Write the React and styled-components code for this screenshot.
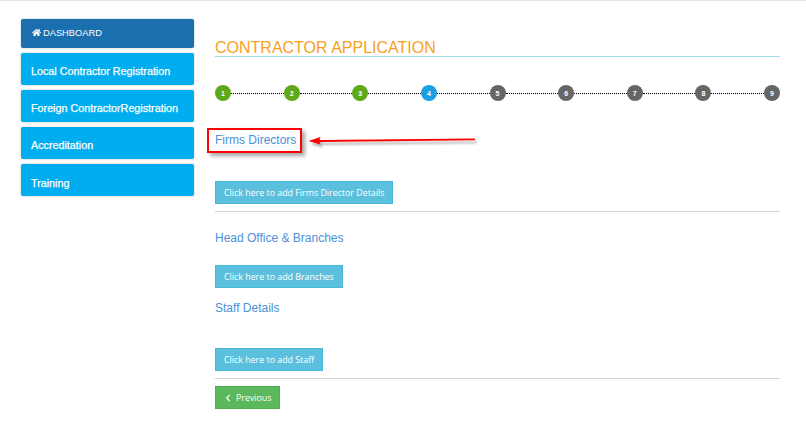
import React from "react";
import styled, { createGlobalStyle } from "styled-components";
import { FaHome, FaChevronLeft } from "react-icons/fa";

const Global = createGlobalStyle`
  html, body { margin: 0; padding: 0; background: #fff; }
  body { font-family: "Liberation Sans", Arial, sans-serif; }
`;

const Page = styled.div`
  position: relative;
  width: 806px;
  height: 431px;
  overflow: hidden;
  box-sizing: border-box;
  border-top: 1px solid #e7e7e7;
  padding: 18px 26px 0 21px;
  display: flex;
  gap: 21px;
`;

const Sidebar = styled.nav`
  width: 173px;
  flex: none;
  display: flex;
  flex-direction: column;
  gap: 5px;
`;

const NavItem = styled.a`
  height: ${(p) => (p.$head ? "29px" : "32px")};
  display: flex;
  align-items: center;
  gap: 2px;
  box-sizing: border-box;
  padding: ${(p) => (p.$head ? "0 0 2px 11px" : "4px 0 0 10px")};
  border-radius: 2px;
  background: ${(p) => (p.$head ? "#1a6fae" : "#00aeef")};
  box-shadow: 0 0 2px rgba(0, 0, 0, 0.3);
  color: #fff;
  font-size: ${(p) => (p.$head ? "9.3px" : "10.75px")};
  -webkit-text-stroke: ${(p) => (p.$head ? "0" : "0.25px #fff")};

  &:last-child {
    padding-top: 6px;
  }
`;

const Main = styled.main`
  flex: 1;
  min-width: 0;
  display: flex;
  flex-direction: column;
`;

const Title = styled.h1`
  margin: 20px 0 0;
  height: 17px;
  border-bottom: 1px solid #a3dce9;
  color: #f9a01b;
  font-size: 16px;
  line-height: 18px;
  font-weight: 400;
`;

const Stepper = styled.div`
  margin-top: 28px;
  display: flex;
  align-items: center;
`;

const Step = styled.span`
  width: 16px;
  height: 16px;
  flex: none;
  border-radius: 50%;
  display: flex;
  align-items: center;
  justify-content: center;
  background: ${(p) => p.$color};
  color: #fff;
  font-size: 7px;
  font-weight: 700;
`;

const Connector = styled.span`
  flex: 1;
  border-top: 1px dotted #000;
`;

const SectionLabel = styled.div`
  color: #4a90d9;
  font-size: 12px;
  line-height: 14px;
  margin-top: ${(p) => p.$top}px;
`;

const ActionButton = styled.button`
  display: flex;
  align-items: center;
  gap: 4px;
  align-self: flex-start;
  height: 23px;
  box-sizing: border-box;
  margin-top: ${(p) => p.$top}px;
  padding: ${(p) => (p.$green ? "0 7px 0 8px" : "0 8px")};
  border: 1px solid ${(p) => (p.$green ? "#4cae4c" : "#46b8da")};
  border-radius: 0;
  background: ${(p) => (p.$green ? "#5cb85c" : "#5bc0de")};
  color: #fff;
  font-family: "Open Sans", sans-serif;
  font-size: 8.85px;
`;

const Rule = styled.hr`
  margin: ${(p) => p.$top}px 0 0;
  border: 0;
  border-top: 1px solid #d4d4d4;
`;

const Callout = styled.div`
  position: absolute;
  left: 207px;
  top: 127px;
  width: 95px;
  height: 25px;
  box-sizing: border-box;
  border: 2px solid #f00;
  box-shadow: 3px 3px 4px rgba(0, 0, 0, 0.35);
`;

const Arrow = styled.svg`
  position: absolute;
  left: 305px;
  top: 130px;
  overflow: visible;
  filter: drop-shadow(2px 3px 1px rgba(0, 0, 0, 0.3));
`;

const steps = [
  ["1", "#5fa818"],
  ["2", "#5fa818"],
  ["3", "#5fa818"],
  ["4", "#1b9fe2"],
  ["5", "#666"],
  ["6", "#666"],
  ["7", "#666"],
  ["8", "#666"],
  ["9", "#666"],
];

export default function App() {
  return (
    <>
      <Global />
      <Page>
        <Sidebar>
          <NavItem $head>
            <FaHome size={9} /> DASHBOARD
          </NavItem>
          <NavItem>Local Contractor Registration</NavItem>
          <NavItem>Foreign ContractorRegistration</NavItem>
          <NavItem>Accreditation</NavItem>
          <NavItem>Training</NavItem>
        </Sidebar>
        <Main>
          <Title>CONTRACTOR APPLICATION</Title>
          <Stepper>
            {steps.map(([n, color], i) => (
              <React.Fragment key={n}>
                {i > 0 && <Connector />}
                <Step $color={color}>{n}</Step>
              </React.Fragment>
            ))}
          </Stepper>
          <SectionLabel $top={32}>Firms Directors</SectionLabel>
          <ActionButton $top={34}>Click here to add Firms Director Details</ActionButton>
          <Rule $top={7} />
          <SectionLabel $top={19}>Head Office &amp; Branches</SectionLabel>
          <ActionButton $top={20}>Click here to add Branches</ActionButton>
          <SectionLabel $top={13}>Staff Details</SectionLabel>
          <ActionButton $top={33}>Click here to add Staff</ActionButton>
          <Rule $top={7} />
          <ActionButton $green $top={7}>
            <FaChevronLeft size={8} /> Previous
          </ActionButton>
        </Main>
        <Callout />
        <Arrow width="175" height="20" viewBox="0 0 175 20">
          <path d="M3.5 10 L15.5 6 L14.5 9 L170 7.6 L170 9.2 L14.5 11 L15.5 13.5 Z" fill="#f00" />
        </Arrow>
      </Page>
    </>
  );
}
